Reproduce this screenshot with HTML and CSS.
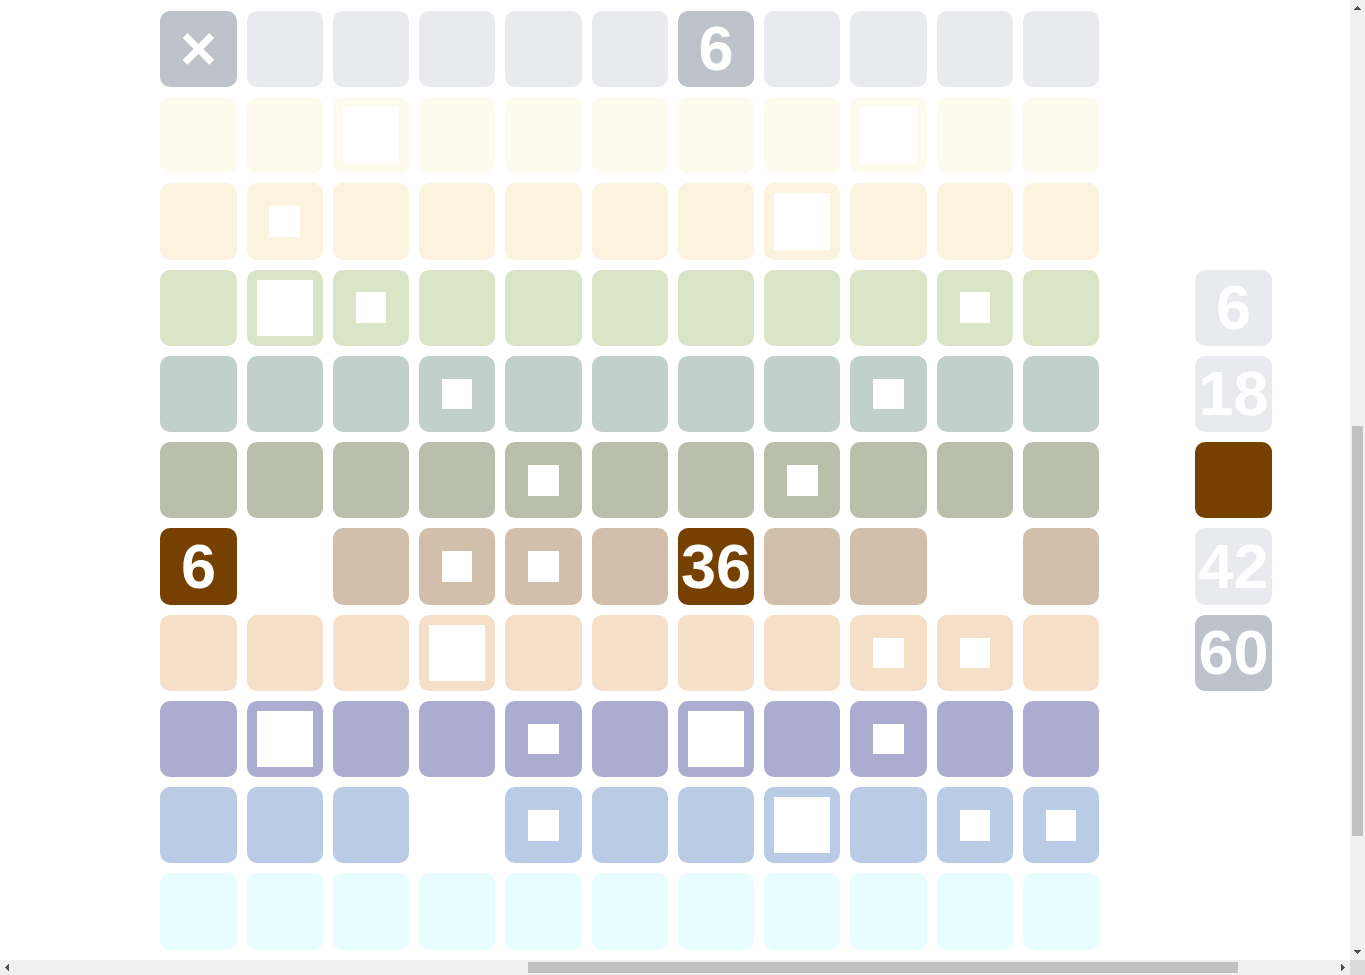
FILE: index.html
```html
<!DOCTYPE html>
<html lang="en">
<head>
<meta charset="utf-8">
<meta name="viewport" content="width=device-width, initial-scale=1">
<title>Multiplication table</title>
<link rel="stylesheet" href="styles.css">
</head>
<body>
<div class="window">
  <main class="board">
    <div class="row row-head">
      <div class="cell strong">×</div><div class="cell"></div><div class="cell"></div><div class="cell"></div><div class="cell"></div><div class="cell"></div><div class="cell strong">6</div><div class="cell"></div><div class="cell"></div><div class="cell"></div><div class="cell"></div>
    </div>
    <div class="row row-1">
      <div class="cell"></div><div class="cell"></div><div class="cell large"></div><div class="cell"></div><div class="cell"></div><div class="cell"></div><div class="cell"></div><div class="cell"></div><div class="cell large"></div><div class="cell"></div><div class="cell"></div>
    </div>
    <div class="row row-2">
      <div class="cell"></div><div class="cell small"></div><div class="cell"></div><div class="cell"></div><div class="cell"></div><div class="cell"></div><div class="cell"></div><div class="cell large"></div><div class="cell"></div><div class="cell"></div><div class="cell"></div>
    </div>
    <div class="row row-3">
      <div class="cell"></div><div class="cell large"></div><div class="cell small"></div><div class="cell"></div><div class="cell"></div><div class="cell"></div><div class="cell"></div><div class="cell"></div><div class="cell"></div><div class="cell small"></div><div class="cell"></div>
      <button class="cell choice" type="button">6</button>
    </div>
    <div class="row row-4">
      <div class="cell"></div><div class="cell"></div><div class="cell"></div><div class="cell small"></div><div class="cell"></div><div class="cell"></div><div class="cell"></div><div class="cell"></div><div class="cell small"></div><div class="cell"></div><div class="cell"></div>
      <button class="cell choice" type="button">18</button>
    </div>
    <div class="row row-5">
      <div class="cell"></div><div class="cell"></div><div class="cell"></div><div class="cell"></div><div class="cell small"></div><div class="cell"></div><div class="cell"></div><div class="cell small"></div><div class="cell"></div><div class="cell"></div><div class="cell"></div>
      <button class="cell choice picked" type="button" aria-label="Chosen answer"></button>
    </div>
    <div class="row row-6">
      <div class="cell answer">6</div><div class="cell blank"></div><div class="cell"></div><div class="cell small"></div><div class="cell small"></div><div class="cell"></div><div class="cell answer">36</div><div class="cell"></div><div class="cell"></div><div class="cell blank"></div><div class="cell"></div>
      <button class="cell choice" type="button">42</button>
    </div>
    <div class="row row-7">
      <div class="cell"></div><div class="cell"></div><div class="cell"></div><div class="cell large"></div><div class="cell"></div><div class="cell"></div><div class="cell"></div><div class="cell"></div><div class="cell small"></div><div class="cell small"></div><div class="cell"></div>
      <button class="cell choice strong" type="button">60</button>
    </div>
    <div class="row row-8">
      <div class="cell"></div><div class="cell large"></div><div class="cell"></div><div class="cell"></div><div class="cell small"></div><div class="cell"></div><div class="cell large"></div><div class="cell"></div><div class="cell small"></div><div class="cell"></div><div class="cell"></div>
    </div>
    <div class="row row-9">
      <div class="cell"></div><div class="cell"></div><div class="cell"></div><div class="cell blank"></div><div class="cell small"></div><div class="cell"></div><div class="cell"></div><div class="cell large"></div><div class="cell"></div><div class="cell small"></div><div class="cell small"></div>
    </div>
    <div class="row row-10">
      <div class="cell"></div><div class="cell"></div><div class="cell"></div><div class="cell"></div><div class="cell"></div><div class="cell"></div><div class="cell"></div><div class="cell"></div><div class="cell"></div><div class="cell"></div><div class="cell"></div>
    </div>
  </main>

  <div class="bar bar-y">
    <button class="step" type="button" aria-label="Scroll up"><svg viewBox="0 0 15 15"><path d="M7 6h1v1h1v1h1v1h1v1H4V9h1V8h1V7h1z"/></svg></button>
    <div class="thumb"></div>
    <button class="step" type="button" aria-label="Scroll down"><svg viewBox="0 0 15 15"><path d="M4 5h7v1h-1v1H9v1H8v1H7V8H6V7H5V6H4z"/></svg></button>
  </div>
  <div class="bar bar-x">
    <button class="step" type="button" aria-label="Scroll left"><svg viewBox="0 0 15 15"><path d="M9 4v7H8v-1H7V9H6V8H5V7h1V6h1V5h1V4z"/></svg></button>
    <div class="thumb"></div>
    <button class="step" type="button" aria-label="Scroll right"><svg viewBox="0 0 15 15"><path d="M6 4h1v1h1v1h1v1h1v1H9v1H8v1H7v1H6z"/></svg></button>
  </div>
  <div class="corner"></div>
</div>
</body>
</html>
```
FILE: styles.css
```css
* {
  box-sizing: border-box;
}

body {
  margin: 0;
  background: #fff;
  font-family: "Liberation Sans", Arial, sans-serif;
}

button {
  margin: 0;
  padding: 0;
  border: 0;
  font: inherit;
  cursor: pointer;
}

.window {
  display: grid;
  grid-template-columns: minmax(0, 1fr) 15px;
  grid-template-rows: minmax(0, 1fr) 15px;
  height: 100vh;
}

/* Board: eleven table columns, a free column, then the choices */
.board {
  display: flex;
  flex-direction: column;
  gap: 10px;
  padding: 0.8% 5.8% 0 11.875%;
  overflow: hidden;
}

.row {
  --tile: #e9eaee;
  display: grid;
  grid-template-columns: repeat(13, minmax(0, 1fr));
  gap: 10px;
}

.row-1 { --tile: #fdfbed; }
.row-2 { --tile: #fcf3df; }
.row-3 { --tile: #dae5c8; }
.row-4 { --tile: #c2d0cb; }
.row-5 { --tile: #b9bfab; }
.row-6 { --tile: #d2bfab; }
.row-7 { --tile: #f6dfc8; }
.row-8 { --tile: #acabd0; }
.row-9 { --tile: #bacbe6; }
.row-10 { --tile: #e7fdff; }

.cell {
  display: grid;
  place-items: center;
  place-content: center;
  grid-template-columns: 100%;
  aspect-ratio: 1;
  border-radius: 10px;
  background: var(--tile);
  color: #fff;
  font-size: 63px;
  font-weight: bold;
  line-height: 1;
  text-align: center;
}

.cell.choice {
  grid-column: 13;
  background: #e9eaee;
}

.cell.strong { background: #bec2cb; }
.cell.answer,
.cell.picked { background: #764000; }
.cell.blank { background: none; }

.small::after,
.large::after {
  content: "";
  width: 40%;
  aspect-ratio: 1;
  background: #fff;
}

.large::after {
  width: calc(100% - 20px);
}

/* Scroll bars */
.bar {
  display: grid;
  background: #f0f0f0;
}

.bar-y {
  grid-template-rows: 15px 411fr 410fr 109fr 15px;
}

.bar-x {
  grid-template-columns: 15px 513fr 710fr 97fr 15px;
}

.thumb {
  background: #c1c1c1;
}

.bar-y .thumb {
  grid-row: 3;
  margin: 0 2px;
}

.bar-y .step:last-child { grid-row: 5; }

.bar-x .thumb {
  grid-column: 3;
  margin: 2px 0;
}

.bar-x .step:last-child { grid-column: 5; }

.step {
  width: 15px;
  height: 15px;
  background: none;
}

.step svg {
  display: block;
  width: 15px;
  height: 15px;
  fill: #505050;
  shape-rendering: crispEdges;
}

.corner {
  background: #dcdcdc;
}
```
